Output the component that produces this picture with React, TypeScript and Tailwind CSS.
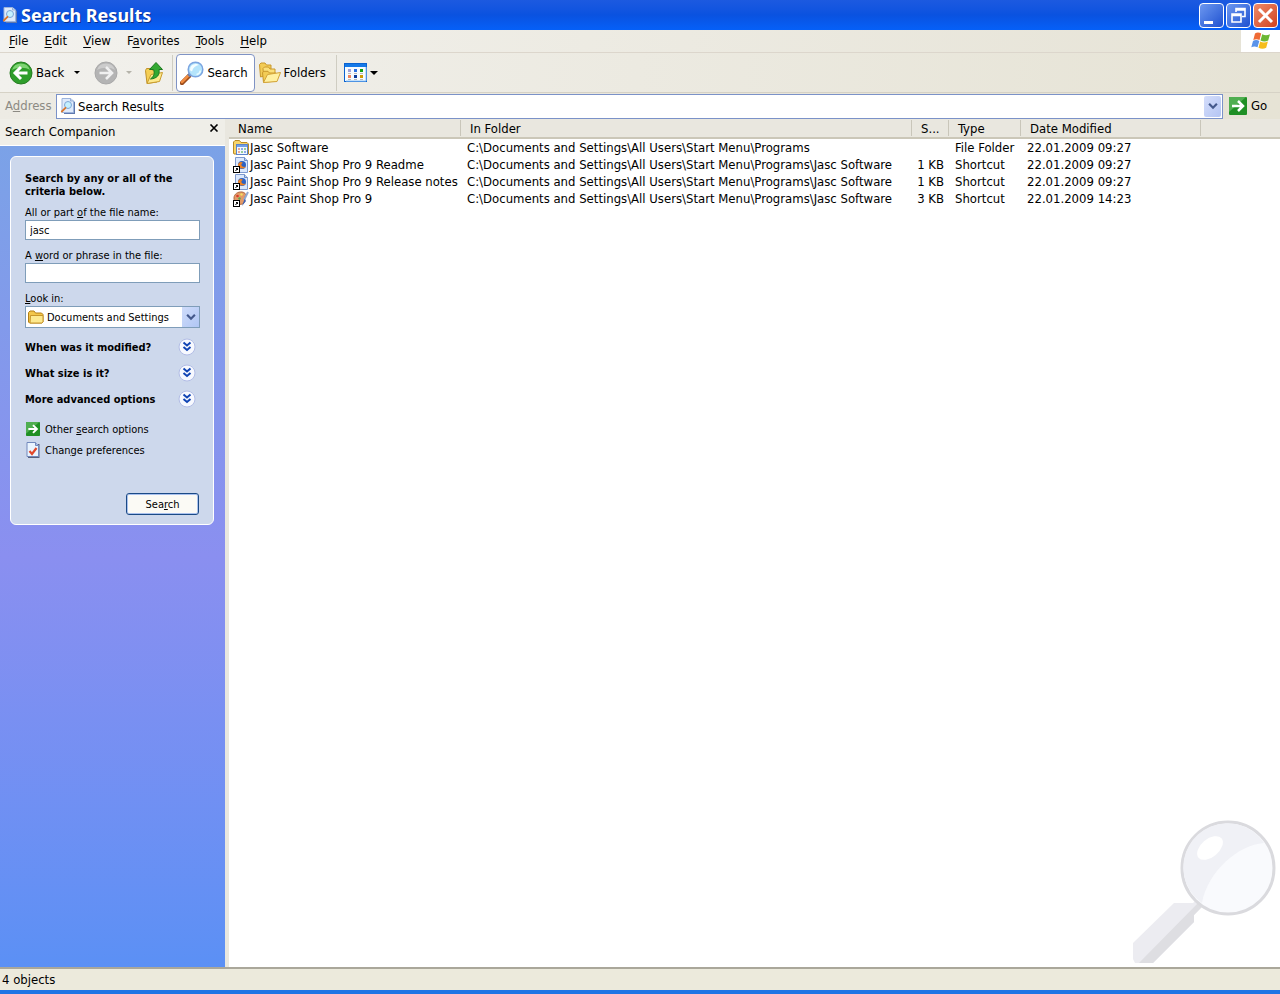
import type { ReactNode } from 'react'

interface ResultRow {
  name: string
  folder: string
  size: string
  type: string
  modified: string
  icon: 'group' | 'html' | 'palette'
}

const PROGRAMS = 'C:\\Documents and Settings\\All Users\\Start Menu\\Programs'

const rows: ResultRow[] = [
  { name: 'Jasc Software', folder: PROGRAMS, size: '', type: 'File Folder', modified: '22.01.2009 09:27', icon: 'group' },
  { name: 'Jasc Paint Shop Pro 9 Readme', folder: `${PROGRAMS}\\Jasc Software`, size: '1 KB', type: 'Shortcut', modified: '22.01.2009 09:27', icon: 'html' },
  { name: 'Jasc Paint Shop Pro 9 Release notes', folder: `${PROGRAMS}\\Jasc Software`, size: '1 KB', type: 'Shortcut', modified: '22.01.2009 09:27', icon: 'html' },
  { name: 'Jasc Paint Shop Pro 9', folder: `${PROGRAMS}\\Jasc Software`, size: '3 KB', type: 'Shortcut', modified: '22.01.2009 14:23', icon: 'palette' },
]

const menus: [string, string, string][] = [
  ['', 'F', 'ile'],
  ['', 'E', 'dit'],
  ['', 'V', 'iew'],
  ['F', 'a', 'vorites'],
  ['', 'T', 'ools'],
  ['', 'H', 'elp'],
]

function PageSearchIcon() {
  return (
    <svg viewBox="0 0 16 16" className="size-4 shrink-0" aria-hidden="true">
      <path d="M4 2h8l3 2v12H4z" fill="#5f78ae" />
      <path d="M2 .5h8.500L13.500 3v11.500H2z" fill="#dfeafb" stroke="#9db4dc" />
      <path d="M10.500 .5V3h3" fill="#c3d6f2" stroke="#8ba4cf" strokeWidth=".8" />
      <circle cx="8" cy="7" r="3.500" fill="#c4f0ff" stroke="#7fa6d6" />
      <path d="M5.500 9.800 1.800 13.500" stroke="#d9762c" strokeWidth="1.800" strokeLinecap="round" />
    </svg>
  )
}

function MagnifierIcon() {
  return (
    <svg viewBox="0 0 24 24" className="size-6 shrink-0" aria-hidden="true">
      <path d="m9 15-7 7" stroke="#9a4c1c" strokeWidth="4.500" strokeLinecap="round" />
      <path d="m8.500 14.500-6.500 6.500" stroke="#f08c40" strokeWidth="2.600" strokeLinecap="round" />
      <path d="m11 12.500-2.500 2.500" stroke="#6d7fa8" strokeWidth="3.500" />
      <circle cx="15.500" cy="8.500" r="7.300" fill="#b4e4fb" stroke="#7ba4e0" strokeWidth="1.500" />
      <path d="M10 8.500a5.500 5.500 0 0 1 5.500-5.500c1.500 0 2.500.4 3.200 1-3 .5-5.700 2.500-6.700 6.500-1.200-.5-2-1-2-2" fill="#f4fdff" />
      <path d="M20.500 9.500a5 5 0 0 1-4 4" fill="none" stroke="#e8fbff" strokeWidth="1.500" />
    </svg>
  )
}

function NavCircle({ forward = false }: { forward?: boolean }) {
  return (
    <svg viewBox="0 0 24 24" className="size-6 shrink-0" aria-hidden="true">
      <circle cx="12" cy="12" r="11" fill={forward ? '#b4b4b4' : '#2f9e2b'} stroke={forward ? '#a9a9a9' : '#277d22'} />
      <path d="M3 9a9.500 9.500 0 0 1 18 0C17 6 8 6 3 9" fill={forward ? '#cccccc' : '#7ed473'} />
      {forward ? (
        <path d="M5.500 12h12M12 6l6 6-6 6" fill="none" stroke="#f0f0f0" strokeWidth="2.600" />
      ) : (
        <path d="M18.500 12h-12M12 6l-6 6 6 6" fill="none" stroke="#fff" strokeWidth="3" />
      )}
    </svg>
  )
}

function FolderUpIcon() {
  return (
    <svg viewBox="0 0 20 24" className="h-6 w-5 shrink-0" aria-hidden="true">
      <path d="M1.500 9.500 2.500 7.500h4L8 9h5v12L3 22.500z" fill="#f5cf55" stroke="#c0922a" />
      <path d="m3 22.500 4-9 11.500-2-3 9z" fill="#fde98c" stroke="#c99c2e" />
      <path d="M12 1.500 5.500 8.500H9.500c1.500 3.500.5 7-3 9.500 6.500-.5 9.500-4 8.500-9.500h3.500z" fill="#33a932" stroke="#1c7a1f" />
    </svg>
  )
}

function FoldersIcon() {
  return (
    <svg viewBox="0 0 24 22" className="h-6 w-6 shrink-0" aria-hidden="true">
      <path d="M1.500 2.500 3 1h4l1.500 2H13v9L2.500 15z" fill="#f3cc55" stroke="#c9982c" />
      <path d="M5 6.500 6.500 5h4L12 7h5v8L6 19z" fill="#fbe07a" stroke="#c9982c" />
      <path d="m5.500 20.500-1-10 1.500-1.200h4L11.500 11H18v8z" fill="#f3cc55" stroke="#c9982c" />
      <path d="m5.500 20.500 4-8 13-2-3.500 9z" fill="#fff0a0" stroke="#d3a438" />
    </svg>
  )
}

function ViewsIcon() {
  return (
    <svg viewBox="0 0 24 20" className="h-5 w-6 shrink-0" aria-hidden="true">
      <rect x=".5" y=".5" width="22" height="18" fill="#f6fbff" stroke="#0a62d0" />
      <rect x="1" y="1" width="21" height="3" fill="#1479e8" />
      <path d="M22 4v14H2" fill="none" stroke="#8fc3f5" />
      <path d="M4 6h3v3H4z" fill="#a0a0d8" />
      <path d="M10 6h3v3h-3z" fill="#2a6fe0" />
      <path d="M16 6h3v3h-3z" fill="#12a012" />
      <path d="M4 12h3v3H4z" fill="#f0845c" />
      <path d="M10 12h3v3h-3z" fill="#0b3a9a" />
      <path d="M16 12h3v3h-3z" fill="#cf9a08" />
      <path d="M4 10.500h3m3 0h3m3 0h3M4 16.500h3m3 0h3m3 0h3" stroke="#b9b9b9" />
    </svg>
  )
}

function GoIcon({ className }: { className: string }) {
  return (
    <svg viewBox="0 0 18 18" className={className} aria-hidden="true">
      <rect width="18" height="18" rx="1" fill="#1f8f24" />
      <path d="M0 1a1 1 0 0 1 1-1h16L0 15z" fill="#4fae50" />
      <path d="M3 9h11M9 4l5 5-5 5" fill="none" stroke="#fff" strokeWidth="2.500" />
    </svg>
  )
}

function WindowsFlag() {
  return (
    <svg viewBox="0 0 20 18" className="h-5 w-5" aria-hidden="true">
      <path d="M4 1.500c2-1.300 4-1.200 6.200 0L8.500 8C6.500 7 4.500 7 2.300 8z" fill="#ef6a35" />
      <path d="M11.200 2.200c2.800 1.300 5 1.200 7.800 0L17.200 8.500c-2.500 1.200-5 1.200-7.700 0z" fill="#6cb733" />
      <path d="M2 9c2-1.200 4.300-1.200 6.300 0l-1.800 6.300c-2-1-4-1-6.200 0z" fill="#5a93ea" />
      <path d="M9.200 9.500c2.500 1.200 5 1.200 7.700 0l-1.700 6.300c-2.500 1.300-5 1.300-7.700 0z" fill="#f6bd1c" />
    </svg>
  )
}

function Chevron() {
  return (
    <svg viewBox="0 0 9 6" className="h-2 w-2.5" aria-hidden="true">
      <path d="m1 1 3.500 3.500L8 1" fill="none" stroke="#44598c" strokeWidth="2" />
    </svg>
  )
}

function DropTriangle({ className }: { className: string }) {
  return (
    <svg viewBox="0 0 8 4" className={className} aria-hidden="true">
      <path d="M0 0h8L4 4z" fill="currentColor" />
    </svg>
  )
}

function FolderSmall() {
  return (
    <svg viewBox="0 0 16 14" className="h-3.5 w-4" aria-hidden="true">
      <path d="M.5 12V2.500L2 1h4l1.500 2h6L15 4.500V12l-1 1H1.500z" fill="#f3c64a" stroke="#b47f14" />
      <path d="M2.500 5.500h12.500V12l-1 1H2z" fill="#fde98f" stroke="#c8962a" />
    </svg>
  )
}

function ShortcutArrow() {
  return (
    <>
      <rect x=".5" y="9.500" width="6" height="6" fill="#fff" stroke="#000" />
      <path d="M3 11.500h1.500V13M4.500 11.500 2.500 14" fill="none" stroke="#000" />
    </>
  )
}

function RowIcon({ kind }: { kind: ResultRow['icon'] }) {
  return (
    <svg viewBox="0 0 16 16" className="size-4 shrink-0" aria-hidden="true">
      {kind === 'group' && (
        <>
          <path d="M.5 13V2L2 .5h4.500L8 2.500h6L15.500 4v10H1z" fill="#f8d468" stroke="#b88a26" />
          <rect x="3.500" y="4.500" width="11" height="10" fill="#f2f7ff" stroke="#5c83c8" />
          <path d="M4 5h10v2H4z" fill="#6f9fe8" />
          <path d="M5 9h2M5 12h2" stroke="#e8926c" strokeWidth="1.500" />
          <path d="M8 9h2M11 12h2" stroke="#6c94e0" strokeWidth="1.500" />
          <path d="M11 9h2M8 12h2" stroke="#78c078" strokeWidth="1.500" />
        </>
      )}
      {kind === 'html' && (
        <>
          <path d="M2.500.5h9l3 3v12h-12z" fill="#dbe8fc" stroke="#7f9ad0" />
          <path d="M11.500.5v3h3" fill="#bcd0f0" stroke="#6f8cc4" />
          <circle cx="9" cy="8" r="4" fill="#2d62c4" />
          <path d="M5 7.500c0 4 5.500 5.500 8 2-2 .8-4 .3-4.500-1.200C8 7 9 6 10 6 8.500 4.500 6.500 4.500 5 7.500" fill="#f08222" />
          <ShortcutArrow />
        </>
      )}
      {kind === 'palette' && (
        <>
          <path d="M1 7c0-4 4-6.500 8-6 3.500.5 4.500 3 3 5-1 1.500.5 3-.5 5-1 2.500-5 3-8 1.500C1.500 11.500 1 9 1 7" fill="#e39a68" stroke="#b0683c" />
          <circle cx="4.500" cy="5" r="1.300" fill="#d83a28" />
          <circle cx="8.500" cy="3.500" r="1.200" fill="#f4df60" />
          <circle cx="6.500" cy="7.500" r="1.200" fill="#58a850" />
          <path d="m15 1-4 8" stroke="#90a8d0" strokeWidth="2" />
          <path d="m11.500 8-2.500 7 4-5z" fill="#3d63b8" />
          <ShortcutArrow />
        </>
      )}
    </svg>
  )
}

function PreferencesIcon() {
  return (
    <svg viewBox="0 0 14 16" className="h-4 w-3.5 shrink-0" aria-hidden="true">
      <path d="M2 2h11.500v14H2z" fill="#56607c" />
      <path d="M1 .5h8.500l3 3v11H1z" fill="#eaf4ff" stroke="#7289bd" />
      <path d="M9.500.5v3h3" fill="#a9c0e8" stroke="#7289bd" />
      <path d="m3.500 9 2.500 3 4.500-6" fill="none" stroke="#e0482c" strokeWidth="2.200" />
    </svg>
  )
}

function CaptionButton({ label, close = false, children }: { label: string; close?: boolean; children: ReactNode }) {
  return (
    <button
      type="button"
      aria-label={label}
      className={`size-[25px] rounded border border-white ${close ? 'bg-linear-to-br from-[#ee8a68] to-[#d0401c]' : 'bg-linear-to-br from-[#6d97f0] to-[#1f50d0]'}`}
    >
      <svg viewBox="0 0 23 23" aria-hidden="true">
        {children}
      </svg>
    </button>
  )
}

function Expander({ children }: { children: ReactNode }) {
  return (
    <button type="button" className="flex h-5 w-full items-center justify-between pr-1 text-left font-bold">
      {children}
      <svg viewBox="0 0 18 18" className="size-4.5" aria-hidden="true">
        <circle cx="9" cy="9" r="8" fill="#f7f9ff" stroke="#b2bde6" />
        <path d="m5.500 4.500 3.500 3 3.500-3M5.500 9 9 12l3.500-3" fill="none" stroke="#1044b4" strokeWidth="2" />
      </svg>
    </button>
  )
}

function Separator() {
  return <div className="h-9 w-px bg-[#cfcdc2]" />
}

function TitleBar() {
  return (
    <header className="flex h-[30px] items-center bg-linear-to-b from-[#1c5ae0] via-[#0a52e0] to-[#0560f8] pr-0.5 pl-0.5">
      <PageSearchIcon />
      <h1 className="ml-[3px] flex-1 font-['Noto_Sans'] text-[18px] leading-6 font-bold text-white [text-shadow:1px_1px_#0a2f8c]">
        Search Results
      </h1>
      <div className="flex gap-0.5">
        <CaptionButton label="Minimize">
          <path d="M4 17h9v3H4z" fill="#fff" />
        </CaptionButton>
        <CaptionButton label="Restore">
          <path d="M9 8V4.500h9v8h-3M9 6h9" fill="none" stroke="#fff" strokeWidth="1.600" />
          <path d="M5 10h9v8H5zM5 11.500h9" fill="none" stroke="#fff" strokeWidth="1.600" />
        </CaptionButton>
        <CaptionButton label="Close" close>
          <path d="m5 5 13 13M18 5 5 18" stroke="#fff" strokeWidth="3" />
        </CaptionButton>
      </div>
    </header>
  )
}

function MenuBar() {
  return (
    <div className="flex h-[23px] border-b border-[#dcd6cc] bg-linear-to-r from-[#f3f2ee] to-[#e6e3d6]">
      <nav className="flex flex-1 items-center gap-4 pl-[9px]">
        {menus.map(([before, key, after]) => (
          <button key={key} type="button">
            {before}
            <u className="underline-offset-2">{key}</u>
            {after}
          </button>
        ))}
      </nav>
      <div className="flex w-[39px] items-center justify-center bg-white">
        <WindowsFlag />
      </div>
    </div>
  )
}

function Toolbar() {
  return (
    <div className="flex h-10 items-center border-b border-[#d6d2c6] bg-linear-to-r from-[#f2f1ed] to-[#e6e3d5] pl-[9px]">
      <button type="button" className="flex items-center gap-[3px]">
        <NavCircle />
        Back
      </button>
      <button type="button" aria-label="Back history" className="ml-2.5">
        <DropTriangle className="h-[3px] w-1.5" />
      </button>
      <button type="button" aria-label="Forward" className="ml-3.5">
        <NavCircle forward />
      </button>
      <button type="button" aria-label="Forward history" className="ml-2">
        <DropTriangle className="h-[3px] w-1.5 text-[#b5b3aa]" />
      </button>
      <button type="button" aria-label="Up" className="mr-2 ml-3">
        <FolderUpIcon />
      </button>
      <Separator />
      <button type="button" className="ml-[3px] flex h-[38px] items-center gap-[3px] rounded border border-[#7f93c4] bg-white pr-1.5 pl-[3px]">
        <MagnifierIcon />
        Search
      </button>
      <button type="button" className="mr-2.5 ml-[3px] flex items-center gap-0.5">
        <FoldersIcon />
        Folders
      </button>
      <Separator />
      <button type="button" aria-label="Views" className="ml-[7px] flex items-center gap-0.5">
        <ViewsIcon />
        <DropTriangle className="h-1 w-2" />
      </button>
    </div>
  )
}

function AddressBar() {
  return (
    <div className="flex h-[26px] items-center bg-linear-to-r from-[#edebe4] to-[#e6e3d5] pl-[5px]">
      <label htmlFor="address" className="w-[51px] text-[#8c8a83]">
        A<u>d</u>dress
      </label>
      <div className="flex h-[25px] flex-1 items-center border border-[#7b92c8] bg-white pr-px pl-[3px]">
        <PageSearchIcon />
        <input id="address" defaultValue="Search Results" className="ml-0.5 min-w-0 flex-1 pt-0.5 outline-none" />
        <button type="button" aria-label="Show addresses" className="flex h-[21px] w-[17px] items-center justify-center rounded-xs bg-linear-to-br from-[#d5defb] to-[#b4c5f3]">
          <Chevron />
        </button>
      </div>
      <button type="button" className="ml-1.5 flex w-[51px] items-center gap-1">
        <GoIcon className="size-[18px]" />
        Go
      </button>
    </div>
  )
}

function SearchCompanion() {
  return (
    <aside className="flex w-[225px] shrink-0 flex-col">
      <div className="flex h-[27px] items-center justify-between border-b border-white bg-[#efeee8] pr-1.5 pl-[5px]">
        <h2>Search Companion</h2>
        <button type="button" aria-label="Close" className="mb-2">
          <svg viewBox="0 0 9 8" className="h-2 w-2.5" aria-hidden="true">
            <path d="m1 .5 7 7m0-7-7 7" stroke="#000" strokeWidth="1.600" />
          </svg>
        </button>
      </div>
      <div className="flex-1 bg-linear-to-b from-[#7ba2e7] via-[#8a8ff0] via-50% to-[#5b90f5] px-2.5 pt-2.5">
        <form
          className="mr-px flex h-[369px] flex-col rounded-md border border-white bg-[#cdd8ec] pt-[15px] pr-[13px] pb-[9px] pl-3.5 text-[11px] leading-[13px]"
          onSubmit={event => event.preventDefault()}
        >
          <p className="font-bold">Search by any or all of the criteria below.</p>
          <label htmlFor="file-name" className="mt-2">
            All or part <u>o</u>f the file name:
          </label>
          <input id="file-name" defaultValue="jasc" className="mt-px h-5 border border-[#7f9db9] bg-white px-1 outline-none" />
          <label htmlFor="phrase" className="mt-[9px]">
            A <u>w</u>ord or phrase in the file:
          </label>
          <input id="phrase" className="mt-px h-5 border border-[#7f9db9] bg-white px-1 outline-none" />
          <label htmlFor="look-in" className="mt-[9px]">
            <u>L</u>ook in:
          </label>
          <div className="relative mt-px flex">
            <select id="look-in" className="h-[22px] w-full appearance-none border border-[#7f9db9] bg-white pl-[21px] outline-none">
              <option>Documents and Settings</option>
            </select>
            <span className="pointer-events-none absolute top-1 left-[3px]">
              <FolderSmall />
            </span>
            <span className="pointer-events-none absolute inset-y-px right-px flex w-[17px] items-center justify-center bg-linear-to-br from-[#cfdcfa] to-[#b0c6f4]">
              <Chevron />
            </span>
          </div>
          <div className="mt-[9px] flex flex-col gap-1.5">
            <Expander>When was it modified?</Expander>
            <Expander>What size is it?</Expander>
            <Expander>More advanced options</Expander>
          </div>
          <div className="mt-3 flex flex-col items-start gap-[5px]">
            <a href="#options" className="flex h-4 items-center gap-[5px] pl-px">
              <GoIcon className="size-3.5 shrink-0" />
              <span>
                Other <u>s</u>earch options
              </span>
            </a>
            <a href="#preferences" className="flex h-4 items-center gap-[5px] pl-px">
              <PreferencesIcon />
              <span>
                Chan<u>g</u>e preferences
              </span>
            </a>
          </div>
          <button
            type="submit"
            className="mt-auto mr-px h-[22px] w-[73px] self-end rounded-[3px] border border-[#1b4a86] bg-[#fbfaf5] shadow-[inset_0_0_0_1px_#a9c1ee]"
          >
            Sea<u>r</u>ch
          </button>
        </form>
      </div>
    </aside>
  )
}

function HeaderCell({ children }: { children?: ReactNode }) {
  return (
    <th className="h-[19px] border-b-2 border-[#cbc7b8] bg-[#e9e7df] p-0 text-left font-normal">
      <div className="h-4 truncate border-r border-[#c9c6ba] pr-1.5 pl-[9px] leading-[18px]">{children}</div>
    </th>
  )
}

function ResultsTable() {
  return (
    <table className="w-full table-fixed border-collapse leading-[17px] whitespace-nowrap">
      <colgroup>
        <col className="w-[232px]" />
        <col className="w-[451px]" />
        <col className="w-[37px]" />
        <col className="w-[72px]" />
        <col className="w-[180px]" />
        <col />
      </colgroup>
      <thead>
        <tr>
          <HeaderCell>Name</HeaderCell>
          <HeaderCell>In Folder</HeaderCell>
          <HeaderCell>S...</HeaderCell>
          <HeaderCell>Type</HeaderCell>
          <HeaderCell>Date Modified</HeaderCell>
          <th className="border-b-2 border-[#cbc7b8] bg-[#e9e7df]" />
        </tr>
      </thead>
      <tbody>
        {rows.map(row => (
          <tr key={row.name}>
            <td className="h-[17px] p-0 pl-1">
              <div className="flex h-[17px] items-center gap-px">
                <RowIcon kind={row.icon} />
                {row.name}
              </div>
            </td>
            <td className="p-0 pl-1.5">{row.folder}</td>
            <td className="p-0 pr-[5px] text-right">{row.size}</td>
            <td className="p-0 pl-1.5">{row.type}</td>
            <td className="p-0 pl-1.5">{row.modified}</td>
            <td className="p-0" />
          </tr>
        ))}
      </tbody>
    </table>
  )
}

function Watermark() {
  return (
    <svg viewBox="0 0 150 150" className="absolute right-0 bottom-0 size-[150px]" aria-hidden="true">
      <path d="M44 86h19l6-6 6 6-11 12v7l-41 41H5l-2-4v-16z" fill="#ececf1" />
      <path d="m70 84 4 4-10 10v7l-41 41H9z" fill="#dedee2" />
      <circle cx="98" cy="51" r="46" fill="#f9fafd" stroke="#dadade" strokeWidth="3" />
      <path d="M54 58a44 44 0 0 1 80-32C108 28 78 54 72 86a44 44 0 0 1-18-28" fill="#f0f1f6" />
      <ellipse cx="80" cy="31" rx="15" ry="9" fill="#fff" transform="rotate(-40 80 31)" />
    </svg>
  )
}

export default function App() {
  return (
    <div className="flex min-h-screen flex-col bg-[#e9e7df] font-['DejaVu_Sans_Condensed','DejaVu_Sans',sans-serif] text-[13px] leading-4 text-black">
      <TitleBar />
      <MenuBar />
      <Toolbar />
      <AddressBar />
      <div className="flex flex-1">
        <SearchCompanion />
        <main className="relative ml-1 min-w-0 flex-1 bg-white">
          <ResultsTable />
          <Watermark />
        </main>
      </div>
      <footer className="h-[27px] border-t-2 border-b-4 border-t-[#aaa79a] border-b-[#2074e4] bg-[#eceadc] pt-[3px] pl-0.5">
        4 objects
      </footer>
    </div>
  )
}
